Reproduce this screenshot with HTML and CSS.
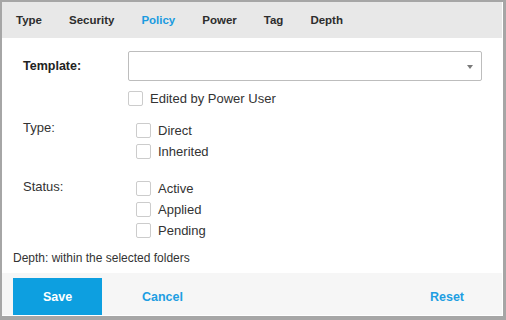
FILE: index.html
```html
<!DOCTYPE html>
<html lang="en">
<head>
    <meta charset="UTF-8">
    <meta name="viewport" content="width=device-width, initial-scale=1.0">
    <title>Policy Filter</title>
    <link rel="stylesheet" href="styles.css">
</head>
<body>
    <div class="window">
        <nav class="tabs">
            <a class="tab">Type</a>
            <a class="tab">Security</a>
            <a class="tab active">Policy</a>
            <a class="tab">Power</a>
            <a class="tab">Tag</a>
            <a class="tab">Depth</a>
        </nav>

        <div class="form">
            <div class="template-row">
                <label class="template-label">Template:</label>
                <div class="select">
                    <span class="arrow"></span>
                </div>
            </div>

            <label class="check edited">
                <span class="box"></span>
                <span>Edited by Power User</span>
            </label>

            <div class="group">
                <div class="group-label">Type:</div>
                <div class="options">
                    <label class="check"><span class="box"></span><span>Direct</span></label>
                    <label class="check"><span class="box"></span><span>Inherited</span></label>
                </div>
            </div>

            <div class="group status">
                <div class="group-label">Status:</div>
                <div class="options">
                    <label class="check"><span class="box"></span><span>Active</span></label>
                    <label class="check"><span class="box"></span><span>Applied</span></label>
                    <label class="check"><span class="box"></span><span>Pending</span></label>
                </div>
            </div>

            <p class="depth-note">Depth: within the selected folders</p>
        </div>

        <div class="footer">
            <button class="btn save">Save</button>
            <button class="btn link">Cancel</button>
            <button class="btn link reset">Reset</button>
        </div>
    </div>
</body>
</html>
```

FILE: styles.css
```css
* {
    margin: 0;
    padding: 0;
    box-sizing: border-box;
    font-family: 'Liberation Sans', Arial, sans-serif;
}

body {
    background: #ffffff;
}

.window {
    width: 506px;
    height: 320px;
    border: 2px solid #a6a6a6;
    border-right-width: 3px;
    border-bottom-width: 4px;
    padding: 0 1px 1px 0;
    background: #ffffff;
    display: flex;
    flex-direction: column;
}

.tabs {
    height: 36px;
    background: #e8e8e8;
    display: flex;
    align-items: center;
    gap: 27px;
    padding-left: 14px;
}

.tab {
    font-size: 11.5px;
    font-weight: bold;
    color: #2d2d2d;
    cursor: pointer;
}

.tab.active {
    color: #1a9be0;
}

.form {
    flex: 1;
    padding: 13px 20px 0 21px;
    color: #333333;
    font-size: 13px;
}

.template-row {
    display: flex;
    align-items: center;
}

.template-label {
    width: 105px;
    font-size: 12.5px;
    font-weight: bold;
    color: #222222;
}

.select {
    flex: 1;
    height: 30px;
    border: 1px solid #bdbdbd;
    border-radius: 2px;
    position: relative;
}

.arrow {
    position: absolute;
    right: 8px;
    top: 13px;
    border-left: 3px solid transparent;
    border-right: 3px solid transparent;
    border-top: 4px solid #7a7a7a;
}

.check {
    display: flex;
    align-items: center;
    gap: 7px;
    height: 15px;
    line-height: 15px;
    cursor: pointer;
}

.box {
    width: 15px;
    height: 15px;
    border: 1px solid #cccccc;
    border-radius: 2px;
    background: #ffffff;
}

.edited {
    margin: 10px 0 0 105px;
}

.group {
    display: flex;
    align-items: flex-start;
    margin-top: 17px;
}

.group.status {
    margin-top: 22px;
}

.group-label {
    width: 113px;
    line-height: 15px;
    margin-top: -3px;
}

.status .group-label {
    margin-top: -2px;
}

.options {
    display: flex;
    flex-direction: column;
    gap: 6px;
}

.depth-note {
    margin: 12px 0 0 -10px;
    font-size: 12px;
    line-height: 16px;
    color: #333333;
}

.footer {
    height: 42px;
    background: #f6f6f6;
    display: flex;
    align-items: flex-end;
    padding-left: 11px;
}

.btn {
    border: none;
    background: none;
    font-size: 12.5px;
    font-weight: bold;
    cursor: pointer;
    height: 37px;
}

.save {
    width: 89px;
    background: #0d9fe0;
    color: #ffffff;
}

.link {
    color: #1e9ee2;
    margin-left: 40px;
}

.reset {
    margin-left: auto;
    margin-right: 38px;
}
```
